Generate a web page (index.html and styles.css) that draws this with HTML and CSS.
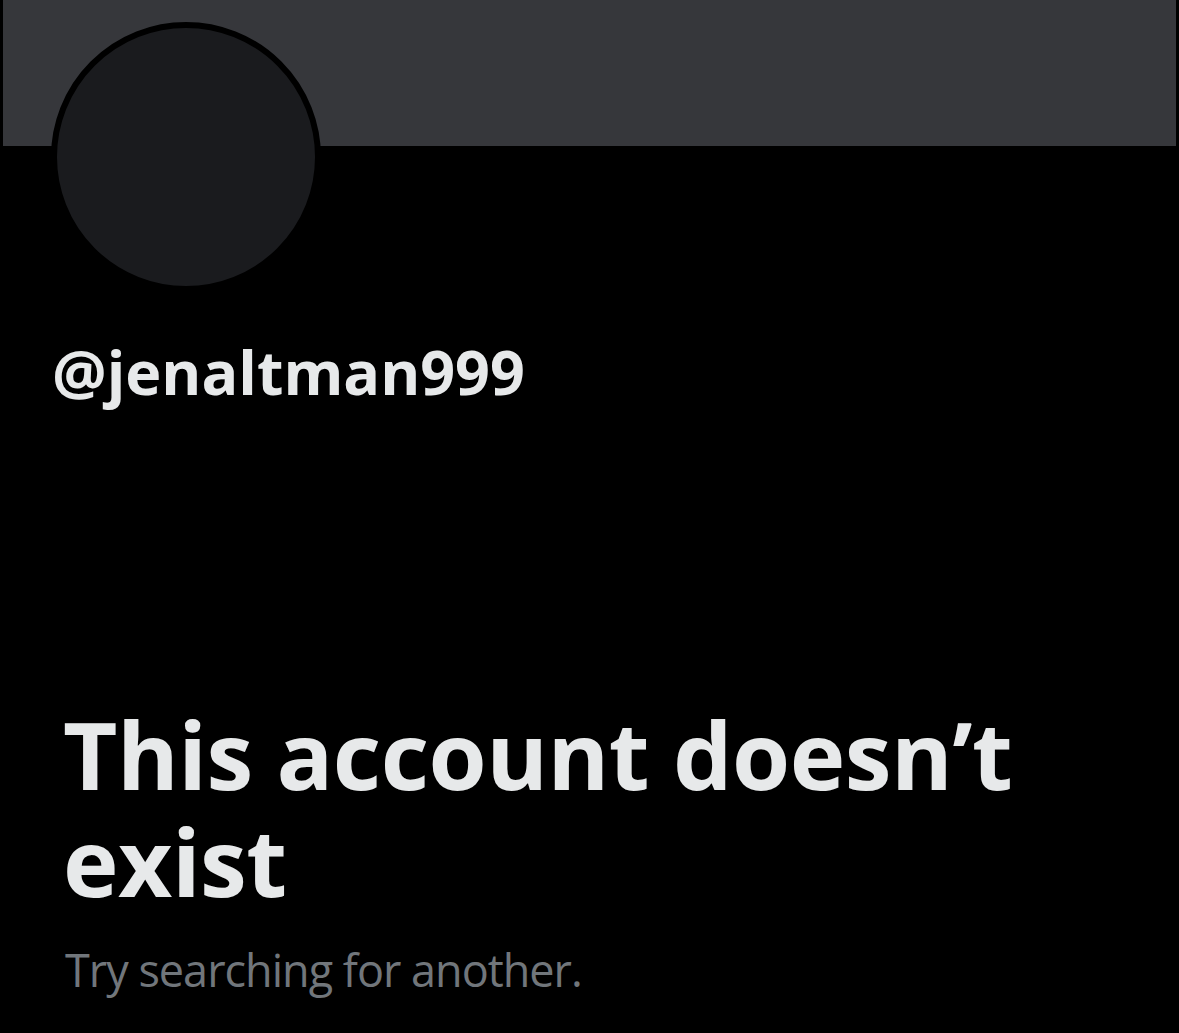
FILE: index.html
```html
<!DOCTYPE html>
<html>
<head>
<meta charset="utf-8">
<link rel="stylesheet" href="styles.css">
</head>
<body>
<div class="page">
  <div class="banner"></div>
  <div class="avatar"></div>
  <div class="handle">@jenaltman999</div>
  <div class="notice">
    <h1 class="title">This account doesn’t exist</h1>
    <p class="sub">Try searching for another.</p>
  </div>
</div>
</body>
</html>
```

FILE: styles.css
```css
html, body {
  margin: 0;
  padding: 0;
  background: #000;
}
.page {
  width: 1179px;
  height: 1033px;
  overflow: hidden;
  font-family: "Open Sans", "Liberation Sans", sans-serif;
  color: #e7e9ea;
}
.banner {
  height: 146px;
  margin: 0 3px;
  background: #36373b;
}
.avatar {
  box-sizing: border-box;
  width: 270px;
  height: 270px;
  margin: -124px 0 0 51px;
  border: 6px solid #000;
  border-radius: 50%;
  background: #1a1b1e;
}
.handle {
  margin: 40px 0 0 52px;
  font-size: 61px;
  font-weight: 700;
  line-height: 80px;
}
.notice {
  padding: 0 0 0 63px;
  margin-top: 289px;
}
.title {
  margin: 0;
  font-size: 94px;
  font-weight: 700;
  line-height: 107px;
  letter-spacing: -0.5px;
  width: 1050px;
}
.sub {
  margin: 25px 0 0 2px;
  font-size: 45px;
  font-weight: 400;
  line-height: 60px;
  letter-spacing: -1px;
  color: #71767b;
}
```
